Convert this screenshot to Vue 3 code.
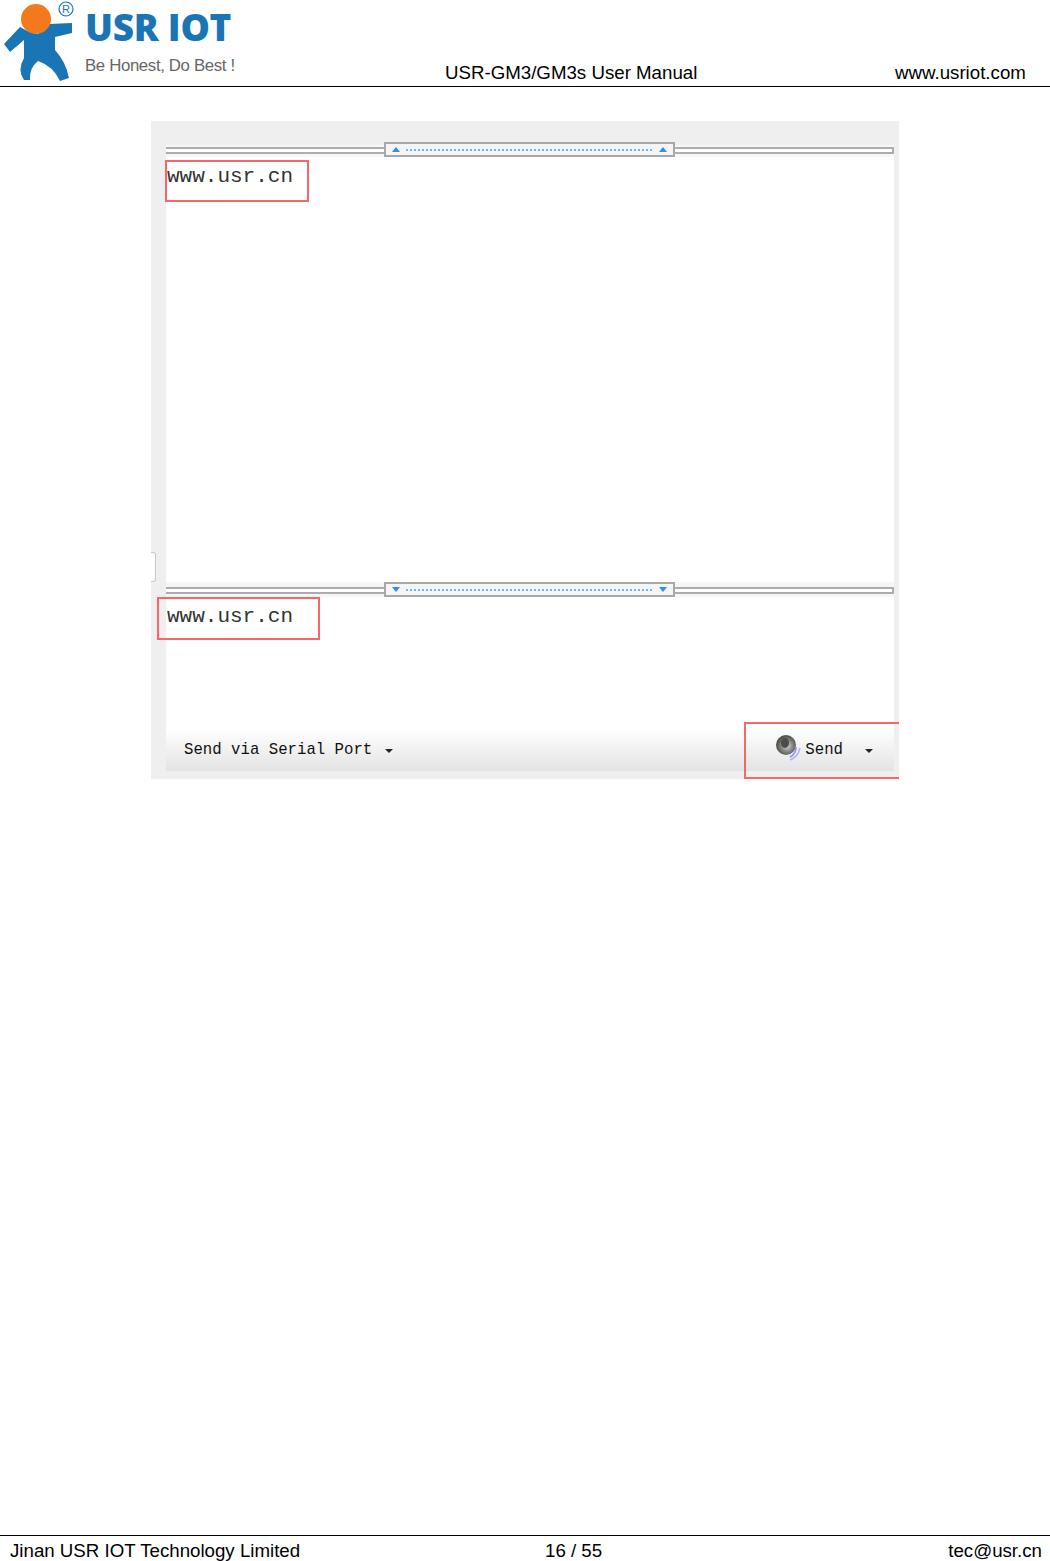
<template>
  <div class="page">
    <!-- page header -->
    <header class="doc-header">
      <div class="logo">
        <svg class="logo-mark" width="80" height="84" viewBox="0 0 80 84">
          <path
            d="M49 24 L72 23 L72 33 L55 37 L55 50 Q66 62 69 78 L60 81 Q53 66 38 61 Q29 68 30 80 L24 80 Q17 70 24 58 L24 40 L10 52 L4 44 L20 27 Q30 33 38 34 Z"
            fill="#1a75b5"
          />
          <circle cx="36" cy="19" r="15" fill="#f37a1c" />
          <circle cx="66" cy="9" r="7" fill="none" stroke="#1a75b5" stroke-width="1.2" />
          <text x="66" y="13" text-anchor="middle" class="reg">R</text>
        </svg>
        <div class="logo-words">
          <div class="logo-name">USR IOT</div>
          <div class="logo-slogan">Be Honest, Do Best !</div>
        </div>
      </div>
      <div class="doc-title">USR-GM3/GM3s User Manual</div>
      <div class="doc-url">www.usriot.com</div>
    </header>

    <!-- screenshot figure -->
    <main class="doc-body">
      <div class="figure">
        <div class="side-tab"></div>
        <div class="panel">
          <div class="splitter first">
            <div class="split-lines"></div>
            <div class="split-box">
              <span class="arrow up"></span>
              <span class="dots"></span>
              <span class="arrow up"></span>
            </div>
            <div class="split-lines end"></div>
          </div>
          <div class="pane output">www.usr.cn</div>
          <div class="splitter">
            <div class="split-lines"></div>
            <div class="split-box">
              <span class="arrow down"></span>
              <span class="dots"></span>
              <span class="arrow down"></span>
            </div>
            <div class="split-lines end"></div>
          </div>
          <div class="pane input">www.usr.cn</div>
          <div class="toolbar">
            <div class="tool-left">
              <span>Send via Serial Port</span>
              <span class="caret"></span>
            </div>
            <div class="tool-right">
              <svg width="26" height="28" viewBox="0 0 26 28">
                <defs>
                  <radialGradient id="spk" cx="0.55" cy="0.55" r="0.6">
                    <stop offset="0" stop-color="#d8d8d8" />
                    <stop offset="0.45" stop-color="#8a8a86" />
                    <stop offset="1" stop-color="#3c3c3a" />
                  </radialGradient>
                </defs>
                <circle cx="11" cy="11" r="10" fill="url(#spk)" />
                <ellipse cx="10" cy="9" rx="4" ry="5" fill="#4c4c4a" />
                <path d="M21 13 Q21 20 15 23" fill="none" stroke="#8f8fe6" stroke-width="1.6" />
                <path d="M25 14 Q23 23 15 26" fill="none" stroke="#b4b4f0" stroke-width="1.6" />
              </svg>
              <span class="send-label">Send</span>
              <span class="caret"></span>
            </div>
          </div>
        </div>
        <!-- red annotations -->
        <div class="mark m1"></div>
        <div class="mark m2"></div>
        <div class="mark m3"></div>
      </div>
    </main>

    <!-- page footer -->
    <footer class="doc-footer">
      <div class="foot-left">Jinan USR IOT Technology Limited</div>
      <div class="foot-mid">16 / 55</div>
      <div class="foot-right">tec@usr.cn</div>
    </footer>
  </div>
</template>

<script setup>
</script>

<style>
html,
body {
  margin: 0;
  background: #fff;
}
</style>

<style scoped>
.page {
  width: 1050px;
  height: 1561px;
  display: flex;
  flex-direction: column;
  font-family: "Liberation Sans", Arial, sans-serif;
  color: #000;
  overflow: hidden;
}

/* header */
.doc-header {
  height: 86px;
  border-bottom: 1px solid #000;
  display: flex;
  align-items: flex-end;
  font-size: 18.7px;
  line-height: 21px;
  box-sizing: content-box;
}

.logo {
  width: 445px;
  height: 86px;
  display: flex;
  flex: none;
}

.logo-mark {
  flex: none;
}

.reg {
  font-family: "Liberation Sans", Arial, sans-serif;
  font-size: 11px;
  fill: #1a75b5;
}

.logo-words {
  margin-left: 5px;
}

.logo-name {
  margin-top: 3px;
  font-family: "Open Sans", sans-serif;
  font-weight: 800;
  font-size: 37px;
  line-height: 48px;
  letter-spacing: -0.3px;
  color: #1a75b5;
  white-space: nowrap;
}

.logo-slogan {
  margin-top: 5px;
  font-size: 16.8px;
  line-height: 20px;
  letter-spacing: -0.35px;
  color: #666;
  white-space: nowrap;
}

.doc-title {
  width: 450px;
  flex: none;
  padding-bottom: 3px;
}

.doc-url {
  padding-bottom: 3px;
  white-space: nowrap;
}

/* figure */
.doc-body {
  flex: 1;
  padding: 34px 0 0 151px;
}

.figure {
  position: relative;
  width: 748px;
  height: 658px;
  background: #efefef;
  padding: 21px 5px 8px 15px;
  box-sizing: border-box;
}

.side-tab {
  position: absolute;
  left: 0;
  top: 431px;
  width: 4px;
  height: 28px;
  background: #fff;
  border: 1px solid #c8c8c8;
  border-left: none;
  border-radius: 0 3px 3px 0;
}

.panel {
  height: 100%;
  display: flex;
  flex-direction: column;
  background: #fff;
}

.splitter {
  height: 15px;
  flex: none;
  display: flex;
  align-items: center;
  background: #f6f6f6;
}

.splitter.first {
  background: linear-gradient(#efefef 3px, #f7f7f7 3px);
}

.split-lines {
  height: 3px;
  flex: 1;
  margin-top: 2px;
  border-top: 2px solid #adadad;
  border-bottom: 2px solid #adadad;
  background: #fff;
}

.split-lines.end {
  border-right: 2px solid #adadad;
}

.split-box {
  width: 291px;
  height: 15px;
  flex: none;
  box-sizing: border-box;
  border: 2px solid #a8a8a8;
  background: #f3f5f7;
  display: flex;
  align-items: center;
  padding: 0 6px;
  gap: 6px;
}

.dots {
  flex: 1;
  height: 2px;
  background: repeating-linear-gradient(90deg, #6cb3f7 0 2px, transparent 2px 4px);
}

.arrow {
  width: 0;
  height: 0;
  border-left: 4px solid transparent;
  border-right: 4px solid transparent;
}

.arrow.up {
  border-bottom: 5px solid #2f8ff0;
}

.arrow.down {
  border-top: 5px solid #2f8ff0;
}

.pane {
  box-sizing: border-box;
  font-family: "Liberation Mono", monospace;
  font-size: 21px;
  line-height: 24px;
  color: #333;
  padding-left: 1px;
}

.output {
  height: 425px;
  padding-top: 8px;
}

.input {
  height: 132px;
  padding-top: 8px;
}

.toolbar {
  flex: 1;
  display: flex;
  align-items: center;
  justify-content: space-between;
  background: linear-gradient(#fff, #e3e3e3);
  font-family: "Liberation Mono", monospace;
  font-size: 15.7px;
  color: #111;
  padding: 0 21px 0 18px;
}

.tool-left,
.tool-right {
  display: flex;
  align-items: center;
}

.caret {
  width: 0;
  height: 0;
  border-left: 4.5px solid transparent;
  border-right: 4.5px solid transparent;
  border-top: 4.5px solid #222;
  margin-left: 13px;
  margin-top: 2px;
}

.tool-right svg {
  margin-bottom: 4px;
}

.send-label {
  margin-left: 4px;
}

.tool-right .caret {
  margin-left: 22px;
}

/* red annotation boxes */
.mark {
  position: absolute;
  box-sizing: border-box;
  border: 2px solid #f8666a;
}

.m1 {
  left: 14px;
  top: 39px;
  width: 144px;
  height: 42px;
}

.m2 {
  left: 6px;
  top: 476px;
  width: 163px;
  height: 43px;
}

.m3 {
  left: 593px;
  top: 601px;
  width: 155px;
  height: 57px;
  border-right: none;
}

/* footer */
.doc-footer {
  height: 25px;
  flex: none;
  border-top: 1px solid #000;
  display: flex;
  align-items: flex-end;
  font-size: 18.7px;
  line-height: 21px;
}

.foot-left {
  padding-left: 10px;
  width: 535px;
  flex: none;
}

.foot-mid {
  flex: 1;
}

.foot-right {
  padding-right: 8px;
}
</style>
